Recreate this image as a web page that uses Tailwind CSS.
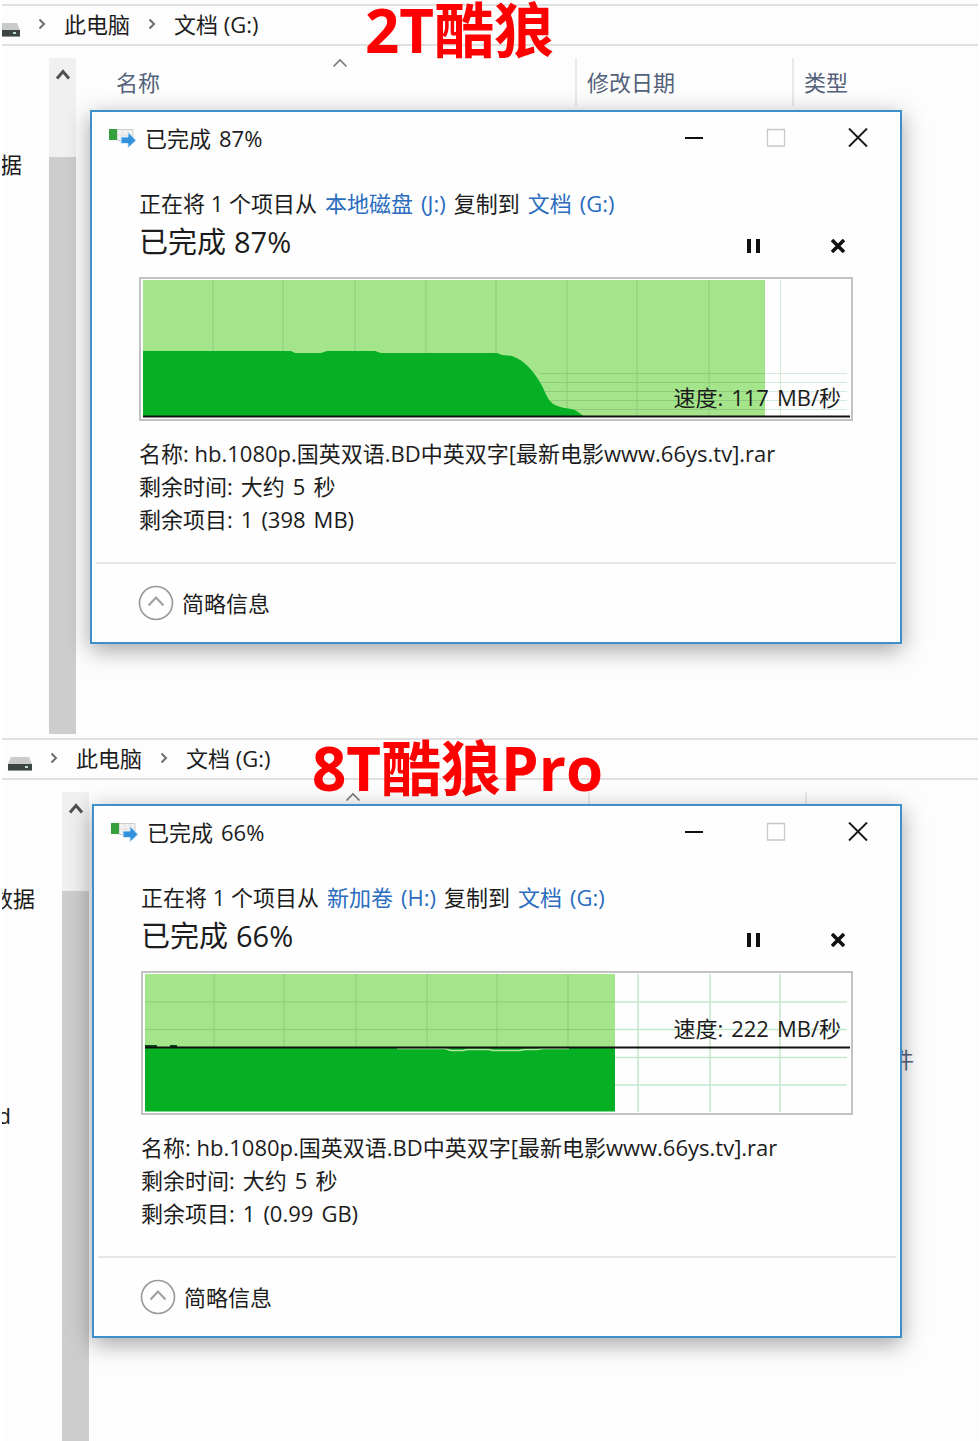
<!DOCTYPE html>
<html lang="zh-CN">
<head>
  <meta charset="UTF-8" />
  <meta name="viewport" content="width=device-width, initial-scale=1" />
  <title>2T酷狼 / 8T酷狼Pro</title>
  <script src="https://cdn.jsdelivr.net/npm/@tailwindcss/browser@4"></script>
</head>
<body class="bg-white px-0.5 font-['Open_Sans','Noto_Sans_CJK_SC',sans-serif] text-[22px] leading-8 text-[#1c1c1c]">
  <!-- shared icons -->
  <svg class="hidden">
    <symbol id="drive" viewBox="0 0 24 16">
      <path d="M3 1h18l3 7H0z" fill="#c9cbcb" />
      <path d="M0 8h24v6H0z" fill="#3c4444" />
      <path d="M0 14h24v1H0z" fill="#8f9696" />
      <path d="M17 10h3v2h-3z" fill="#b8dcc8" />
    </symbol>
    <symbol id="crumb" viewBox="0 0 8 12">
      <path d="M1.5 1.5 6 6l-4.500 4.500" fill="none" stroke="#6e6e6e" stroke-width="2" />
    </symbol>
    <symbol id="scroll-up" viewBox="0 0 16 12">
      <path d="M2 10.500 8 3.500l6 7" fill="none" stroke="#505050" stroke-width="3" />
    </symbol>
    <symbol id="sort" viewBox="0 0 16 10">
      <path d="M1.500 8.500 8 2l6.500 6.500" fill="none" stroke="#777" stroke-width="1.600" />
    </symbol>
    <symbol id="copy" viewBox="0 0 28 22">
      <path d="M9 2.500h16v11H9z" fill="#f1f3f1" stroke="#c9cdd0" />
      <path d="M15 3v10M20 3v10M9 8h16" stroke="#e6dcdf" />
      <path d="M1 2h8v11H1z" fill="#36a13c" />
      <path d="M13 10h7V5l8 8.500-8 7.500v-4.500h-7z" fill="#3292dc" stroke="#d4e9f8" />
    </symbol>
    <symbol id="min" viewBox="0 0 20 20">
      <path d="M1 10h18" stroke="#111" stroke-width="2" />
    </symbol>
    <symbol id="max" viewBox="0 0 20 20">
      <path d="M1.500 1.500h17v16.500h-17z" fill="none" stroke="#c8c8c8" stroke-width="1.300" />
    </symbol>
    <symbol id="close" viewBox="0 0 20 20">
      <path d="m1 0.500 18 18m0-18-18 18" stroke="#1a1a1a" stroke-width="1.900" />
    </symbol>
    <symbol id="pause" viewBox="0 0 14 14">
      <path d="M2 0v14M11 0v14" stroke="#111" stroke-width="4" />
    </symbol>
    <symbol id="cancel" viewBox="0 0 14 14">
      <path d="m1 1 12 12m0-12L1 13" stroke="#111" stroke-width="3.600" />
    </symbol>
    <symbol id="collapse" viewBox="0 0 36 36">
      <circle cx="18" cy="18" r="16.500" fill="none" stroke="#999" stroke-width="1.600" />
      <path d="m10.500 20.500 7.500-8 7.500 8" fill="none" stroke="#a2a2a2" stroke-width="2.200" />
    </symbol>
  </svg>

  <main>
    <section class="relative flex min-h-[734px] flex-col overflow-hidden bg-[#fdfdfd] pt-1">
      <nav class="flex h-[42px] items-center gap-[18px] border-y-2 border-[#e0e0e0] pb-[3px]" aria-label="路径">
        <svg class="mt-3 -ml-1.5 h-4 w-6 shrink-0"><use href="#drive" /></svg>
        <svg class="h-3 w-2 shrink-0"><use href="#crumb" /></svg>
        <a href="#">此电脑</a>
        <svg class="h-3 w-2 shrink-0"><use href="#crumb" /></svg>
        <a href="#">文档 (G:)</a>
      </nav>
      <div class="flex grow pt-3">
        <div class="flex w-[47px] shrink-0 justify-end pt-[90px] pr-[27px] whitespace-nowrap">据</div>
        <div class="flex w-[27px] shrink-0 flex-col bg-[#f0f0f0]">
          <button class="flex h-[99px] justify-center pt-2.5" aria-label="向上滚动">
            <svg class="h-3 w-4"><use href="#scroll-up" /></svg>
          </button>
          <div class="grow bg-[#cdcdcd]"></div>
        </div>
        <div class="flex h-12 grow pl-7 text-[#53627a]">
          <button class="relative w-[471px] shrink-0 pl-3 text-left">
            名称
            <svg class="absolute top-0 left-1/2 h-2.5 w-4 -translate-x-1/2"><use href="#sort" /></svg>
          </button>
          <button class="w-[217px] shrink-0 border-l-2 border-[#e8e8e8] pl-2.5 text-left">修改日期</button>
          <button class="grow border-l-2 border-[#e8e8e8] pl-2.5 text-left">类型</button>
        </div>
      </div>

      <h2 class="absolute top-0 left-[363px] text-[60px] leading-[60px] font-bold text-[#fe0000]">2T酷狼</h2>

      <div class="absolute top-[110px] right-[76px] left-[88px] border-2 border-[#3f8fc8] bg-[#fefefe] shadow-[0_6px_22px_rgba(0,0,0,0.36)]" role="dialog" aria-label="已完成 87%">
        <div class="flex h-[54px] items-center pr-8 pb-0.5 pl-4">
          <svg class="mr-[9px] h-[22px] w-7"><use href="#copy" /></svg>
          <span class="flex grow gap-2"><span>已完成</span><span>87%</span></span>
          <div class="flex gap-[62px]">
            <button aria-label="最小化"><svg class="size-5"><use href="#min" /></svg></button>
            <button aria-label="最大化" disabled><svg class="size-5"><use href="#max" /></svg></button>
            <button aria-label="关闭"><svg class="size-5"><use href="#close" /></svg></button>
          </div>
        </div>
        <div class="px-[47px] pt-[21px] pb-[26px]">
          <p class="flex gap-2">
            <span>正在将 1 个项目从</span>
            <a href="#" class="flex gap-2 text-[#2a6cbe]"><span>本地磁盘</span><span>(J:)</span></a>
            <span>复制到</span>
            <a href="#" class="flex gap-2 text-[#2a6cbe]"><span>文档</span><span>(G:)</span></a>
          </p>
          <div class="flex h-[46px] items-center pr-2">
            <span class="flex grow gap-2 text-[29px]"><span>已完成</span><span>87%</span></span>
            <div class="flex gap-[70px] pt-2">
              <button aria-label="暂停"><svg class="size-3.5"><use href="#pause" /></svg></button>
              <button aria-label="取消"><svg class="size-3.5"><use href="#cancel" /></svg></button>
            </div>
          </div>
          <div class="relative mt-3 h-36">
            <svg class="size-full" viewBox="0 0 714 144" preserveAspectRatio="none">
              <path d="M1 1h712v142H1z" fill="#fefefe" stroke="#c2c2c2" stroke-width="2" />
              <path d="M641.500 3v136M626 96.500h82M626 105.500h82M626 114.500h82M626 123.500h82M626 132.500h82" stroke="#d3ebd8" />
              <path d="M4 3h622v136H4z" fill="#a4e58c" />
              <path d="M74 3v136M144 3v136M216 3v136M287 3v136M357 3v136M428 3v136M498 3v136M570 3v136M400 96.500h226M400 105.500h226M400 114.500h226M400 123.500h226M400 132.500h226" stroke="#8ccb7b" />
              <path d="M4 74h148l4 2h26l6-2h48l6 2h116l5 2 10 1c14 5 22 16 29 28 5 9 7 18 14 21 8 4 19 3 23 7l7 5H4z" fill="#06b025" />
              <path d="M4 139.500h707" stroke="#111" stroke-width="2" />
            </svg>
            <span class="absolute right-3 bottom-2 flex gap-2"><span>速度:</span><span>117</span><span>MB/秒</span></span>
          </div>
          <div class="mt-4 leading-[33px]">
            <p>名称: hb.1080p.国英双语.BD中英双字[最新电影www.66ys.tv].rar</p>
            <p class="flex gap-2"><span>剩余时间:</span><span>大约</span><span>5</span><span>秒</span></p>
            <p class="flex gap-2"><span>剩余项目:</span><span>1</span><span>(398</span><span>MB)</span></p>
          </div>
        </div>
        <div class="mx-1 flex h-20 items-center border-t-2 border-[#e6e6e6] pl-[42px]">
          <button class="flex items-center gap-2">
            <svg class="size-9"><use href="#collapse" /></svg>
            简略信息
          </button>
        </div>
      </div>
    </section>

    <section class="relative flex min-h-[707px] flex-col overflow-hidden bg-[#fdfdfd] pt-1">
      <nav class="flex h-[42px] items-center gap-[18px] border-y-2 border-[#e0e0e0] pb-[3px]" aria-label="路径">
        <svg class="mt-3 ml-1.5 h-4 w-6 shrink-0"><use href="#drive" /></svg>
        <svg class="h-3 w-2 shrink-0"><use href="#crumb" /></svg>
        <a href="#">此电脑</a>
        <svg class="h-3 w-2 shrink-0"><use href="#crumb" /></svg>
        <a href="#">文档 (G:)</a>
      </nav>
      <div class="flex grow pt-3">
        <div class="flex w-[60px] shrink-0 flex-col gap-[185px] pt-[90px] whitespace-nowrap">
          <span class="flex justify-end pr-[27px]">数据</span>
          <span class="flex w-[9px] justify-end">d</span>
        </div>
        <div class="flex w-[27px] shrink-0 flex-col bg-[#f0f0f0]">
          <button class="flex h-[99px] justify-center pt-2.5" aria-label="向上滚动">
            <svg class="h-3 w-4"><use href="#scroll-up" /></svg>
          </button>
          <div class="grow bg-[#cdcdcd]"></div>
        </div>
        <div class="grow pl-7 text-[#53627a]">
          <div class="flex h-12">
            <button class="relative w-[471px] shrink-0" aria-label="名称">
              <svg class="absolute top-0 left-1/2 h-2.5 w-4 -translate-x-1/2"><use href="#sort" /></svg>
            </button>
            <div class="w-[217px] shrink-0 border-l-2 border-[#e8e8e8]"></div>
            <div class="grow border-l-2 border-[#e8e8e8]"></div>
          </div>
          <div class="flex justify-end pt-[203px] pr-16">件</div>
        </div>
      </div>

      <h2 class="absolute top-1 left-[310px] text-[60px] leading-[60px] font-bold text-[#fe0000]">8T酷狼Pro</h2>

      <div class="absolute top-[70px] right-[76px] left-[90px] border-2 border-[#3f8fc8] bg-[#fefefe] shadow-[0_6px_22px_rgba(0,0,0,0.36)]" role="dialog" aria-label="已完成 66%">
        <div class="flex h-[54px] items-center pr-8 pb-0.5 pl-4">
          <svg class="mr-[9px] h-[22px] w-7"><use href="#copy" /></svg>
          <span class="flex grow gap-2"><span>已完成</span><span>66%</span></span>
          <div class="flex gap-[62px]">
            <button aria-label="最小化"><svg class="size-5"><use href="#min" /></svg></button>
            <button aria-label="最大化" disabled><svg class="size-5"><use href="#max" /></svg></button>
            <button aria-label="关闭"><svg class="size-5"><use href="#close" /></svg></button>
          </div>
        </div>
        <div class="px-[47px] pt-[21px] pb-[26px]">
          <p class="flex gap-2">
            <span>正在将 1 个项目从</span>
            <a href="#" class="flex gap-2 text-[#2a6cbe]"><span>新加卷</span><span>(H:)</span></a>
            <span>复制到</span>
            <a href="#" class="flex gap-2 text-[#2a6cbe]"><span>文档</span><span>(G:)</span></a>
          </p>
          <div class="flex h-[46px] items-center pr-2">
            <span class="flex grow gap-2 text-[29px]"><span>已完成</span><span>66%</span></span>
            <div class="flex gap-[70px] pt-2">
              <button aria-label="暂停"><svg class="size-3.5"><use href="#pause" /></svg></button>
              <button aria-label="取消"><svg class="size-3.5"><use href="#cancel" /></svg></button>
            </div>
          </div>
          <div class="relative mt-3 h-36">
            <svg class="size-full" viewBox="0 0 712 144" preserveAspectRatio="none">
              <path d="M1 1h710v142H1z" fill="#fefefe" stroke="#c2c2c2" stroke-width="2" />
              <path d="M497 3v138M569 3v138M639 3v138M474 31h232M474 58.500h232M474 86.500h232M474 114h232" stroke="#c4e8cc" stroke-width="1.500" />
              <path d="M4 3h470v74H4z" fill="#a4e58c" />
              <path d="M73 3v74M143 3v74M215 3v74M286 3v74M356 3v74M427 3v74M4 31h470M4 58.500h470" stroke="#8ccb7b" />
              <path d="M4 76h470v64.500H4z" fill="#06b025" />
              <path d="M256 77.500h48l6 2h12l4-1h22l4 1h26l6-1h12l6-1h26" fill="none" stroke="#b5e69a" stroke-width="1.500" />
              <path d="M4 75h12M29 75h7" stroke="#0a4a14" stroke-width="2" />
              <path d="M4 76.500h705" stroke="#111" stroke-width="2" />
            </svg>
            <span class="absolute right-3 bottom-[71px] flex gap-2"><span>速度:</span><span>222</span><span>MB/秒</span></span>
          </div>
          <div class="mt-4 leading-[33px]">
            <p>名称: hb.1080p.国英双语.BD中英双字[最新电影www.66ys.tv].rar</p>
            <p class="flex gap-2"><span>剩余时间:</span><span>大约</span><span>5</span><span>秒</span></p>
            <p class="flex gap-2"><span>剩余项目:</span><span>1</span><span>(0.99</span><span>GB)</span></p>
          </div>
        </div>
        <div class="mx-1 flex h-20 items-center border-t-2 border-[#e6e6e6] pl-[42px]">
          <button class="flex items-center gap-2">
            <svg class="size-9"><use href="#collapse" /></svg>
            简略信息
          </button>
        </div>
      </div>
    </section>
  </main>
</body>
</html>
